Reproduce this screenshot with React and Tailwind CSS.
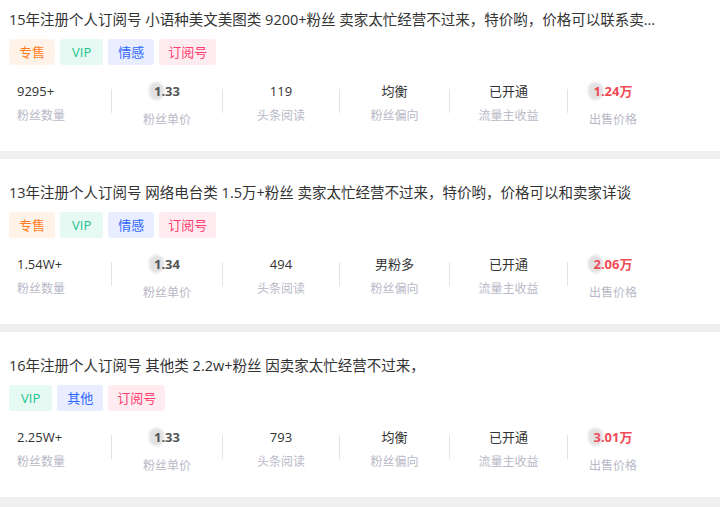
import React from "react";

const TAG = {
  专售: "bg-[#fff2e8] text-[#ff7d22] px-[10px]",
  VIP: "bg-[#e6f9f3] text-[#1fc38d] px-[12px]",
  情感: "bg-[#e8eeff] text-[#2f66ff] px-[10px]",
  其他: "bg-[#e8eeff] text-[#2f66ff] px-[10px]",
  订阅号: "bg-[#ffecf1] text-[#ff3d6e] px-[9px]",
};

const items = [
  {
    title:
      "15年注册个人订阅号 小语种美文美图类 9200+粉丝 卖家太忙经营不过来，特价哟，价格可以联系卖家详谈",
    tags: ["专售", "VIP", "情感", "订阅号"],
    fans: "9295+",
    unit: "1.33",
    read: "119",
    bias: "均衡",
    flow: "已开通",
    price: "1.24万",
  },
  {
    title:
      "13年注册个人订阅号 网络电台类 1.5万+粉丝 卖家太忙经营不过来，特价哟，价格可以和卖家详谈",
    tags: ["专售", "VIP", "情感", "订阅号"],
    fans: "1.54W+",
    unit: "1.34",
    read: "494",
    bias: "男粉多",
    flow: "已开通",
    price: "2.06万",
  },
  {
    title: "16年注册个人订阅号 其他类 2.2w+粉丝 因卖家太忙经营不过来，",
    tags: ["VIP", "其他", "订阅号"],
    fans: "2.25W+",
    unit: "1.33",
    read: "793",
    bias: "均衡",
    flow: "已开通",
    price: "3.01万",
  },
];

function Sep() {
  return <div className="mt-[8px] h-[24px] w-px shrink-0 bg-[#e3e3e3]" />;
}

function Plain({ value, label, className }) {
  return (
    <div className={"flex shrink-0 flex-col " + className}>
      <div className="h-[20px] text-[13px] leading-[20px] text-[#333]">{value}</div>
      <div className="mt-[6px] text-[12px] leading-[18px] text-[#b9b9c8]">{label}</div>
    </div>
  );
}

function Blob({ value, label, className, valueClass }) {
  return (
    <div className={"flex shrink-0 flex-col items-center " + className}>
      <div className="relative h-[20px] text-[13px] font-bold leading-[20px]">
        <span className="absolute left-[-5px] top-[1px] h-[18px] w-[15px] rounded-full bg-[#e2e2e5] blur-[1px]" />
        <span className={"relative " + valueClass}>{value}</span>
      </div>
      <div className="mt-[10px] text-[12px] leading-[18px] text-[#b9b9c8]">{label}</div>
    </div>
  );
}

function Card({ d }) {
  return (
    <div className="h-[165px] bg-white pt-[24px]">
      <div className="ml-[9px] w-[650px] truncate text-[14.5px] leading-[20px] text-[#333]">
        {d.title}
      </div>
      <div className="ml-[9px] mt-[9px] flex gap-[5px]">
        {d.tags.map((t) => (
          <span
            key={t}
            className={
              "flex h-[26px] items-center rounded-[3px] text-[13px] leading-none " + TAG[t]
            }
          >
            {t}
          </span>
        ))}
      </div>
      <div className="mt-[16px] flex">
        <Plain value={d.fans} label="粉丝数量" className="w-[111px] items-start pl-[17px]" />
        <Sep />
        <Blob value={d.unit} label="粉丝单价" className="w-[110px]" valueClass="text-[#555]" />
        <Sep />
        <Plain value={d.read} label="头条阅读" className="w-[116px] items-center" />
        <Sep />
        <Plain value={d.bias} label="粉丝偏向" className="w-[109px] items-center" />
        <Sep />
        <Plain value={d.flow} label="流量主收益" className="w-[117px] items-center" />
        <Sep />
        <Blob value={d.price} label="出售价格" className="w-[90px]" valueClass="text-[#f04b55]" />
      </div>
    </div>
  );
}

export default function App() {
  return (
    <div
      className="h-[507px] w-[720px] overflow-hidden bg-[#efefef]"
      style={{ fontFamily: '"Open Sans", "Noto Sans CJK SC", sans-serif' }}
    >
      <div className="mt-[-14px] flex flex-col gap-[8px]">
        {items.map((d, i) => (
          <Card key={i} d={d} />
        ))}
      </div>
    </div>
  );
}
